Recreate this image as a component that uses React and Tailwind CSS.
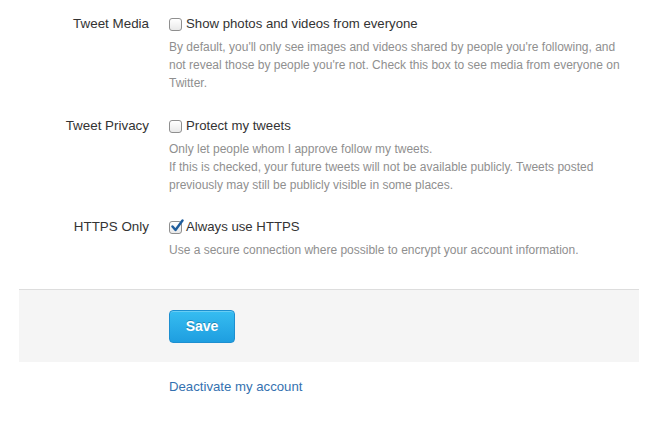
import { useState } from 'react';

const Checkbox = ({ checked, onChange }) => (
    <button
        type="button"
        onClick={onChange}
        className="relative w-[13px] h-[13px] shrink-0 rounded-[3px] border border-[#8f8f8f] bg-gradient-to-b from-white to-[#e9e9e9] shadow-[inset_0_1px_0_#fff]"
    >
        {checked && (
            <svg viewBox="0 0 14 14" className="absolute left-[0px] top-[-3px] w-[14px] h-[14px]">
                <path d="M2.5 7.5 L5.5 11 L12.5 1.5" fill="none" stroke="#1f5d9c" strokeWidth="2.4" strokeLinecap="round" strokeLinejoin="round" />
            </svg>
        )}
    </button>
);

const SettingRow = ({ label, option, checked, onToggle, className, children }) => (
    <div className={`flex ${className || ''}`}>
        <div className="w-[150px] pr-[1px] text-right text-[13.4px] leading-[20px] text-[#333]">{label}</div>
        <div className="ml-[19px] flex-1">
            <label className="flex items-center gap-[4px] text-[13.2px] leading-[20px] text-[#333] cursor-pointer">
                <Checkbox checked={checked} onChange={onToggle} />
                <span>{option}</span>
            </label>
            <div className="mt-[4px] text-[12px] leading-[18px] text-[#8f8f8f] w-[460px]">{children}</div>
        </div>
    </div>
);

const App = () => {
    const [media, setMedia] = useState(false);
    const [privacy, setPrivacy] = useState(false);
    const [https, setHttps] = useState(true);

    return (
        <div className="w-[659px] h-[429px] bg-white font-['Liberation_Sans',Arial,sans-serif]">
            <div className="pt-[14px] flex flex-col pr-[20px]">
                <SettingRow label="Tweet Media" option="Show photos and videos from everyone" checked={media} onToggle={() => setMedia(!media)}>
                    By default, you'll only see images and videos shared by people you're following, and not reveal those by people you're not. Check this box to see media from everyone on Twitter.
                </SettingRow>
                <SettingRow className="mt-[24px]" label="Tweet Privacy" option="Protect my tweets" checked={privacy} onToggle={() => setPrivacy(!privacy)}>
                    <p>Only let people whom I approve follow my tweets.</p>
                    <p>If this is checked, your future tweets will not be available publicly. Tweets posted previously may still be publicly visible in some places.</p>
                </SettingRow>
                <SettingRow className="mt-[23px]" label="HTTPS Only" option="Always use HTTPS" checked={https} onToggle={() => setHttps(!https)}>
                    Use a secure connection where possible to encrypt your account information.
                </SettingRow>
            </div>

            <div className="mt-[30px] mx-[19px] w-[620px] h-[73px] border-t border-[#ddd] bg-[#f5f5f5] pl-[150px] pt-[20px]">
                <button className="w-[66px] h-[33px] rounded-[4px] border border-[#1d8fd0] bg-gradient-to-b from-[#36bdf1] to-[#1e9ee0] text-white text-[14px] font-bold [text-shadow:0_-1px_0_rgba(0,0,0,0.25)] shadow-[inset_0_1px_0_rgba(255,255,255,0.25)]">
                    Save
                </button>
            </div>

            <div className="pl-[169px] pt-[12px]">
                <a href="#" className="text-[13.2px] leading-[18px] text-[#3471b0]">Deactivate my account</a>
            </div>
        </div>
    );
};

export default App;
